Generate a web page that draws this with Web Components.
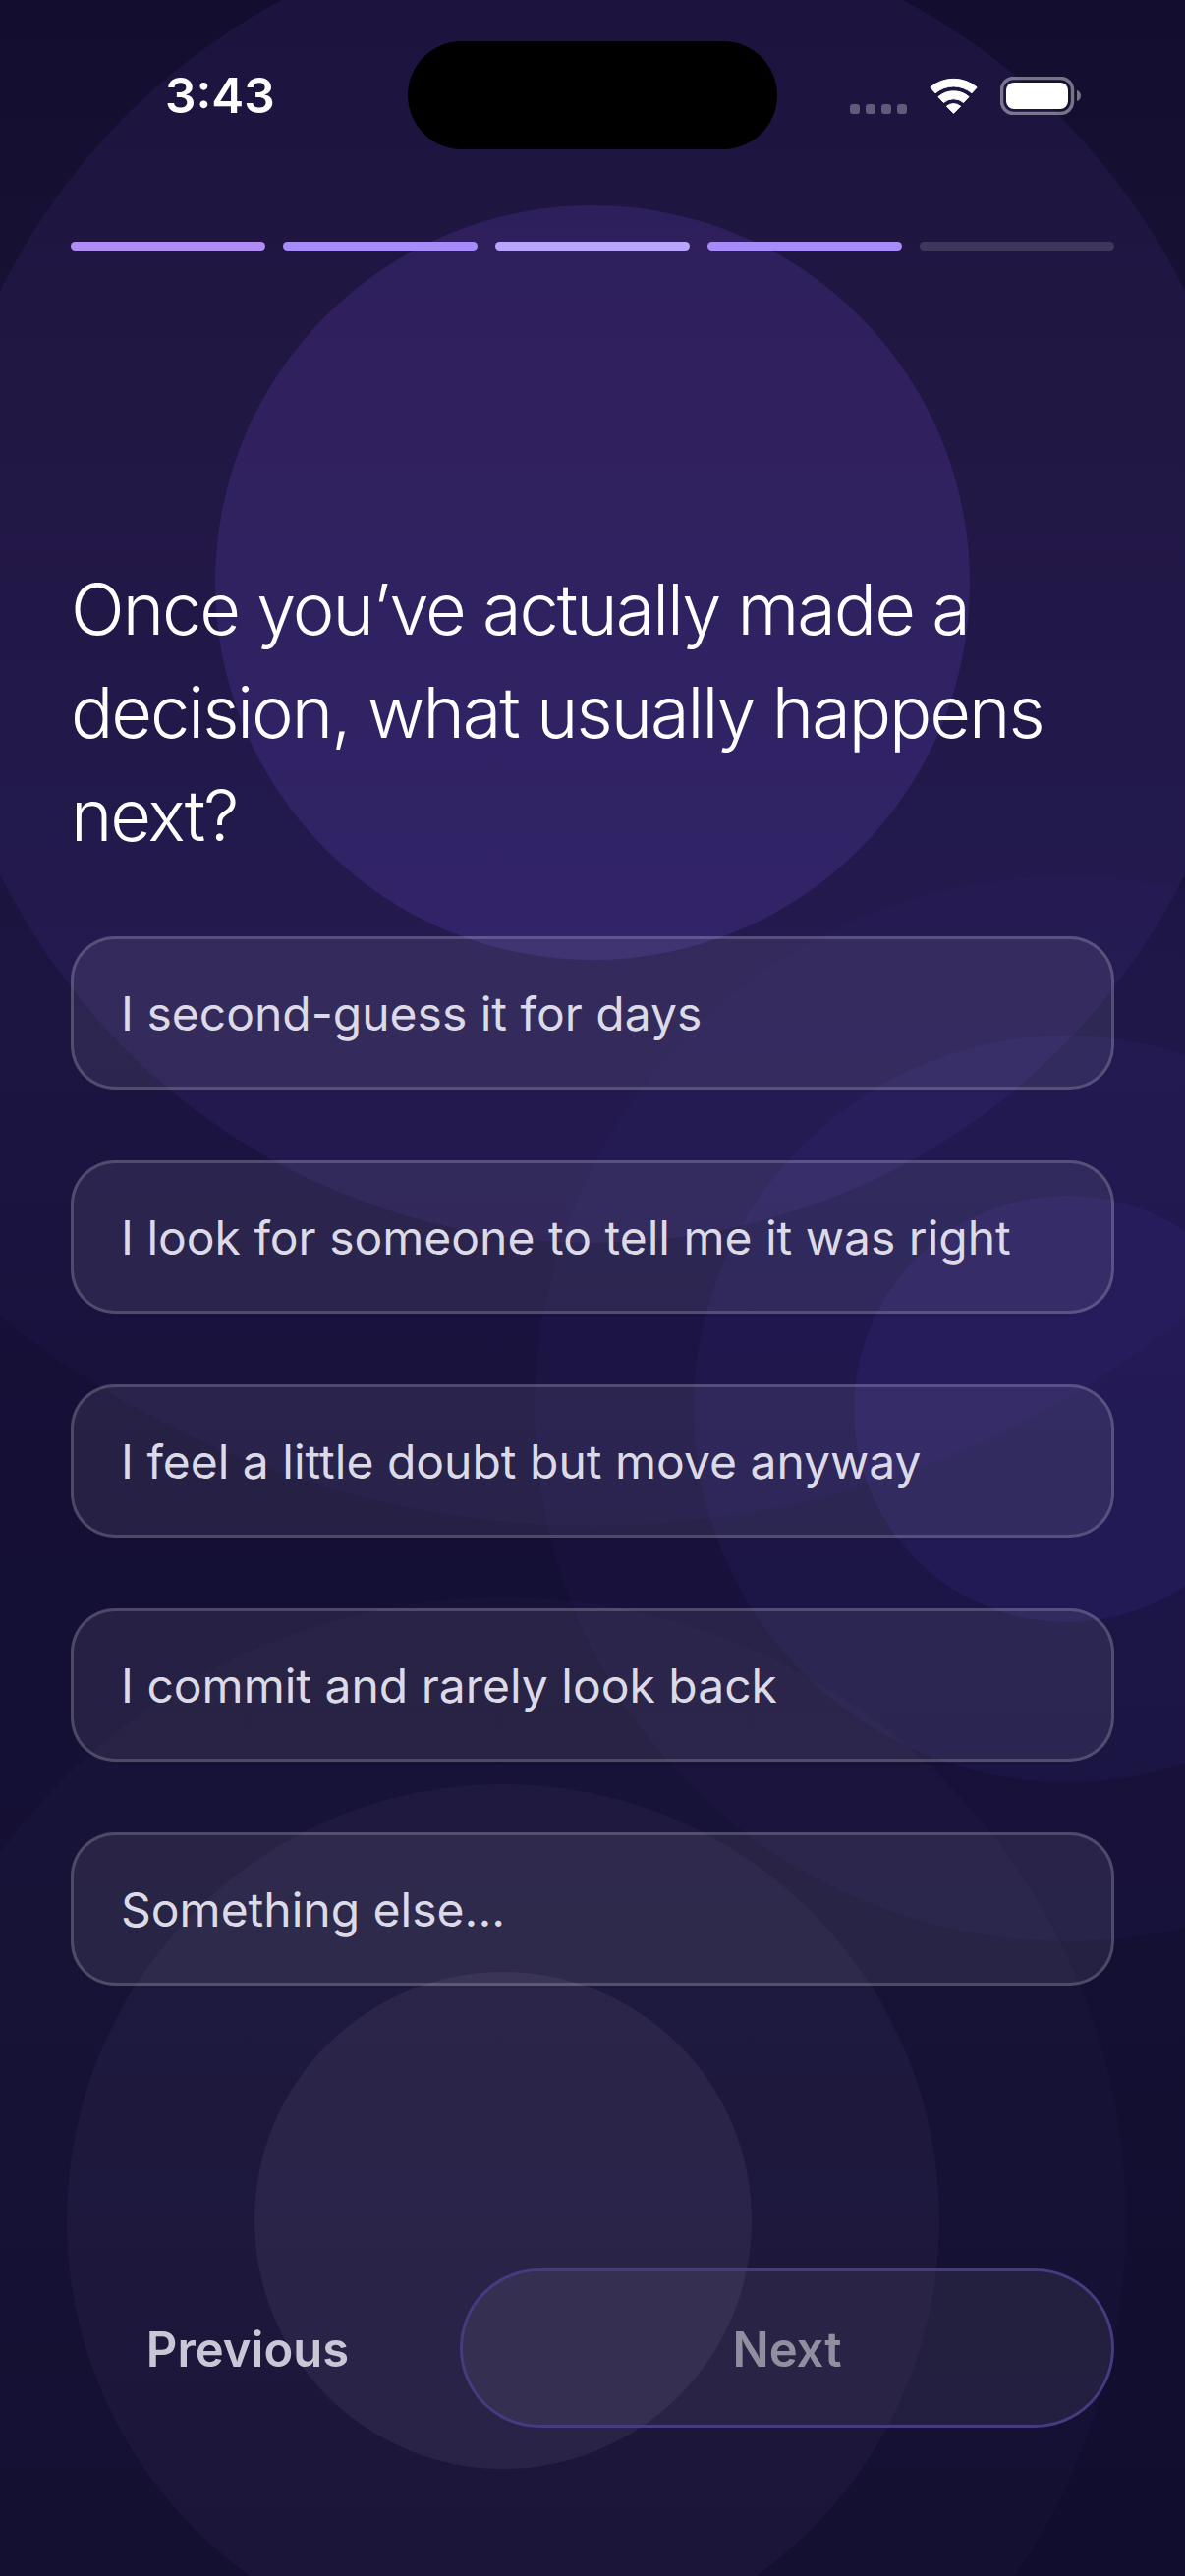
<!DOCTYPE html>
<html lang="en"><head><meta charset="utf-8"><title>Quiz</title>
<style>html,body{margin:0;padding:0;background:#130f2e}</style></head>
<body>
<quiz-screen>
  <status-bar slot="status" time="3:43"></status-bar>
  <progress-track slot="progress" total="5"></progress-track>
  <question-title slot="title">Once you’ve actually made a decision, what usually happens next?</question-title>
  <option-card slot="options">I second-guess it for days</option-card>
  <option-card slot="options">I look for someone to tell me it was right</option-card>
  <option-card slot="options">I feel a little doubt but move anyway</option-card>
  <option-card slot="options">I commit and rarely look back</option-card>
  <option-card slot="options">Something else...</option-card>
  <nav-pill slot="nav" kind="ghost">Previous</nav-pill>
  <nav-pill slot="nav" kind="disabled">Next</nav-pill>
</quiz-screen>
<script>
const def=(n,css,html,extra)=>customElements.define(n,class extends HTMLElement{
  constructor(){super();this.attachShadow({mode:'open'}).innerHTML=`<style>${css}</style>${typeof html==='function'?html(this):html}`}
  connectedCallback(){extra&&extra(this)}
});
const FONT=`Inter,"Liberation Sans",sans-serif`;
const cluster=(x,y,s,col,a)=>[960,672,384].map((r,i)=>{r=r*s;return `<i style="left:${x-r}px;top:${y-r}px;width:${2*r}px;height:${2*r}px;background:rgba(${col},${a[i]})"></i>`}).join('');
def('orb-field',`:host{position:absolute;inset:0;overflow:hidden;display:block}
 i{position:absolute;border-radius:50%;display:block}`,
 cluster(603,593,1,'135,95,246',[.03,.08,.15])+cluster(1086,1434,.565,'99,80,240',[.04,.06,.085])+cluster(512,2260,.66,'228,212,255',[.018,.035,.065]));
def('quiz-screen',`:host{display:block;position:relative;width:1206px;height:2622px;overflow:hidden;
  background:linear-gradient(180deg,#100c29 0,#15102f 15%,#19133c 40%,#150f36 58%,#141033 75%,#110d2e 100%);font-family:${FONT}}
 .col{position:relative;display:flex;flex-direction:column;padding:0 72px;box-sizing:border-box;height:100%}
 .opts{display:flex;flex-direction:column;gap:72px}
 .nav{display:flex;gap:36px;margin-top:288px}
 ::slotted(status-bar){margin:42px -72px 0}
 ::slotted(progress-track){margin-top:94px}
 ::slotted(question-title){margin-top:312px;margin-bottom:71px}`,
 `<orb-field></orb-field><div class="col"><slot name="status"></slot><slot name="progress"></slot><slot name="title"></slot><div class="opts"><slot name="options"></slot></div><div class="nav"><slot name="nav"></slot></div></div>`);
def('status-bar',`:host{display:grid;grid-template-columns:415px 376px 415px;height:110px;color:#fff;font-family:${FONT}}
 .time{font-size:49.500px;font-weight:600;line-height:110px;padding-left:168px;height:110px}
 .island{background:#000;border-radius:55px}
 .right{display:flex;align-items:flex-start;padding:36px 0 0 74px;box-sizing:border-box}
 .sig{display:flex;gap:6px;margin-top:28px}
 .sig b{width:10px;height:10px;border-radius:3px;background:rgba(255,255,255,.3);display:block}
 svg{display:block}
 .wifi{margin:1px 0 0 23px}
 .bat{margin-left:23px}`,
 t=>`<div class="time">${t.getAttribute('time')}</div><div class="island"></div>
 <div class="right"><div class="sig"><b></b><b></b><b></b><b></b></div>
 <svg class="wifi" width="49" height="37" viewBox="0 0 49 37" fill="#fff" stroke="#fff" stroke-width="1" stroke-linejoin="round">
 <path d="M.8 9.9A37 37 0 0 1 48.200 9.9L43 15.800A28.500 28.500 0 0 0 6 15.800Z"/>
 <path d="M8.9 19.600A24 24 0 0 1 40.100 19.600L34.600 25.500A15.500 15.500 0 0 0 14.400 25.500Z"/>
 <path d="M17.400 29.200A11 11 0 0 1 31.600 29.200L24.500 36.400Z"/></svg>
 <svg class="bat" width="82" height="39" viewBox="0 0 82 39"><rect x="1.500" y="1.500" width="72" height="36" rx="12" fill="none" stroke="rgba(255,255,255,.42)" stroke-width="3.400"/>
 <rect x="6" y="6" width="63" height="27" rx="8" fill="#fff"/><path d="M78 14v11c2.500-.8 4-3 4-5.500s-1.500-4.700-4-5.500Z" fill="rgba(255,255,255,.42)"/></svg></div>`);
def('progress-track',`:host{display:flex;gap:18px}
 b{flex:1;height:9px;border-radius:5px;display:block}`,
 `<b style="background:#b08df5"></b><b style="background:#a78bfa"></b><b style="background:#b9a6fc"></b><b style="background:#a78bfa"></b><b style="background:rgba(255,255,255,.14)"></b>`);
def('question-title',`:host{display:block;font-size:72px;font-weight:300;line-height:105px;color:#fff;letter-spacing:-2px;font-family:${FONT}}`,`<slot></slot>`);
def('option-card',`:host{display:flex;align-items:center;height:156px;box-sizing:border-box;padding:1px 48px 0;border:3px solid rgba(255,255,255,.18);border-radius:45px;background:rgba(255,255,255,.075);color:#dcdae6;font-size:48px;font-weight:400;font-family:${FONT}}`,`<slot></slot>`);
def('nav-pill',`:host{display:flex;align-items:center;justify-content:center;height:162px;box-sizing:border-box;border-radius:81px;padding-top:2px;font-size:49px;font-weight:600;font-family:${FONT}}
 :host([kind=ghost]){flex:0 0 360px;color:#c9c7d6}
 :host([kind=disabled]){flex:1;color:#918e9f;border:3px solid #483a80;background:rgba(255,255,255,.06)}`,`<slot></slot>`);
</script>
</body></html>
